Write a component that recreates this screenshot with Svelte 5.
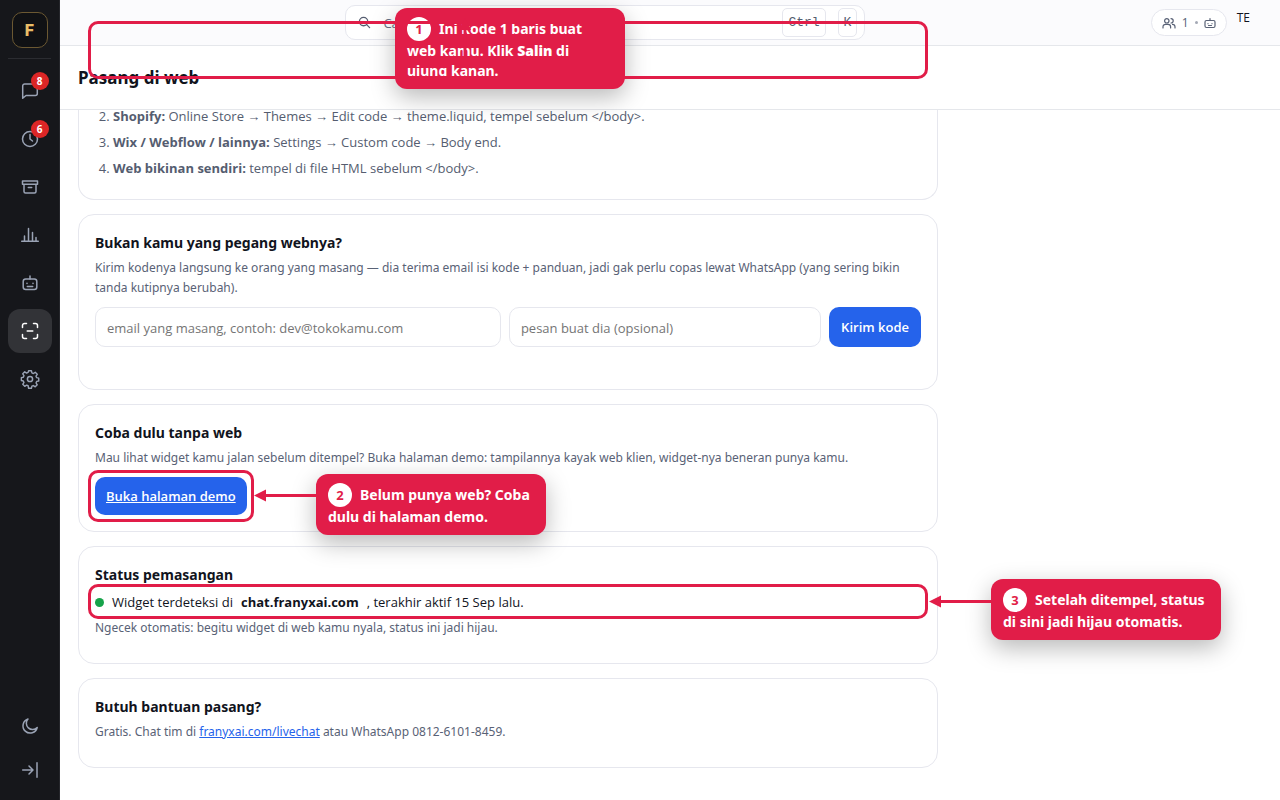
<script>
  const callouts = [
    { n: 1, cls: 'one', before: 'Ini kode 1 baris buat web kamu. Klik ', strong: 'Salin', after: ' di ujung kanan.' },
    { n: 2, cls: 'two', before: 'Belum punya web? Coba dulu di halaman demo.', strong: '', after: '' },
    { n: 3, cls: 'three', before: 'Setelah ditempel, status di sini jadi hijau otomatis.', strong: '', after: '' }
  ];
  const steps = [
    ['Shopify:', 'Online Store → Themes → Edit code → theme.liquid, tempel sebelum </body>.'],
    ['Wix / Webflow / lainnya:', 'Settings → Custom code → Body end.'],
    ['Web bikinan sendiri:', 'tempel di file HTML sebelum </body>.']
  ];
  const nav = [
    { id: 'chat', label: 'Percakapan', badge: 8 },
    { id: 'clock', label: 'Antrean', badge: 6 },
    { id: 'archive', label: 'Arsip' },
    { id: 'chart', label: 'Laporan' },
    { id: 'bot', label: 'Bot' },
    { id: 'scan', label: 'Pasang di web', active: true },
    { id: 'gear', label: 'Pengaturan' }
  ];
</script>

{#snippet icon(id)}
  <svg class="icon" viewBox="0 0 20 20" aria-hidden="true">
    {#if id === 'chat'}
      <path d="M2.700 17.300V5a2 2 0 0 1 2-2h10.600a2 2 0 0 1 2 2v7.500a2 2 0 0 1-2 2H6z" />
    {:else if id === 'clock'}
      <circle cx="10" cy="10" r="7.500" /><path d="M10 5.500V10l2.500 2" />
    {:else if id === 'archive'}
      <path d="M2.500 4h15v3.200h-15zM4 7.200v7.300a1.500 1.500 0 0 0 1.500 1.500h9a1.500 1.500 0 0 0 1.500-1.500V7.200M8.300 10.500h3.400" />
    {:else if id === 'chart'}
      <path d="M1.700 16.300h16.600M4.500 16v-5M8.500 16V3.500M12.500 16V7.500M16 16v-3.500" />
    {:else if id === 'bot'}
      <rect x="3.200" y="6" width="13.600" height="10.500" rx="2.500" /><path d="M10 6V3M7 10.200v.2M13 10.200v.2M7.300 13.500h5.400" />
    {:else if id === 'scan'}
      <path d="M2.500 6.500v-2a2 2 0 0 1 2-2h2M13.500 2.500h2a2 2 0 0 1 2 2v2M17.500 13.500v2a2 2 0 0 1-2 2h-2M6.500 17.500h-2a2 2 0 0 1-2-2v-2M7.200 10h5.600" />
    {:else if id === 'gear'}
      <path d="M8.500 1.500h3l.5 2.300 1.600.7 2-1.300 2.100 2.100-1.300 2 .7 1.600 2.200.5v3l-2.200.5-.7 1.600 1.300 2-2.100 2.100-2-1.300-1.600.7-.5 2.200h-3L8 17.500l-1.600-.7-2 1.300-2.100-2.100 1.300-2-.7-1.600L.8 11.900v-3l2.100-.5.7-1.600-1.300-2 2.100-2.100 2 1.300L8 3.300z" transform="translate(.6 .3) scale(.94)" /><circle cx="10" cy="10" r="2.600" />
    {:else if id === 'moon'}
      <path d="M8 3a7.200 7.200 0 1 0 9.200 8.500A6.200 6.200 0 0 1 8 3z" />
    {:else if id === 'collapse'}
      <path d="M2.700 10h10M9 6l4 4-4 4M17 2.800v14.400" />
    {/if}
  </svg>
{/snippet}

<div class="app">
  <nav class="side" aria-label="Menu utama">
    <a class="logo" href="#beranda">F</a>
    <hr />
    <div class="items">
      {#each nav as item}
        <a class="item" class:active={item.active} href={'#' + item.id} aria-label={item.label}>
          {@render icon(item.id)}
          {#if item.badge}<span class="badge">{item.badge}</span>{/if}
        </a>
      {/each}
    </div>
    <div class="foot">
      <button class="item" aria-label="Mode gelap">{@render icon('moon')}</button>
      <button class="item" aria-label="Buka menu">{@render icon('collapse')}</button>
    </div>
  </nav>

  <div class="page">
    <div class="topbar">
      <div class="search">
        <svg class="glass" viewBox="0 0 14 14" aria-hidden="true"><circle cx="6" cy="6" r="4.500" /><path d="M9.300 9.300l3.200 3.200" /></svg>
        <input type="search" aria-label="Cari" placeholder="Cari" />
        <kbd>Ctrl</kbd><kbd>K</kbd>
      </div>
      <div class="right">
        <button class="presence" aria-label="1 agen aktif">
          <svg viewBox="0 0 14 12" aria-hidden="true"><circle cx="4.800" cy="3.800" r="2.200" /><path d="M1 11V9.800a2.500 2.500 0 0 1 2.500-2.500h2.600a2.500 2.500 0 0 1 2.500 2.500V11M9 1.600a2.200 2.200 0 0 1 0 4.400M10.500 7.400A2.500 2.500 0 0 1 13 9.800V11" /></svg>
          <span>1</span><i></i>
          <svg class="mini" viewBox="0 0 12 12" aria-hidden="true"><rect x="1" y="3.500" width="10" height="7" rx="1.500" /><path d="M6 3.500V1.500M4 6.500v.2M8 6.500v.2M4.500 8.500h3" /></svg>
        </button>
        <span class="user">TE</span>
      </div>
    </div>
    <header><h1>Pasang di web</h1></header>

    <main>
      <section class="card cut">
        <ol start="2">
          {#each steps as [name, text]}<li><b>{name}</b> {text}</li>{/each}
        </ol>
      </section>

      <section class="card">
        <h2>Bukan kamu yang pegang webnya?</h2>
        <p>Kirim kodenya langsung ke orang yang masang — dia terima email isi kode + panduan, jadi gak perlu copas lewat WhatsApp (yang sering bikin tanda kutipnya berubah).</p>
        <form onsubmit={(e) => e.preventDefault()}>
          <input type="email" aria-label="Email yang masang" placeholder="email yang masang, contoh: dev@tokokamu.com" />
          <input type="text" aria-label="Pesan" placeholder="pesan buat dia (opsional)" />
          <button class="primary">Kirim kode</button>
        </form>
      </section>

      <section class="card">
        <h2>Coba dulu tanpa web</h2>
        <p>Mau lihat widget kamu jalan sebelum ditempel? Buka halaman demo: tampilannya kayak web klien, widget-nya beneran punya kamu.</p>
        <a class="primary demo ringed" href="#demo">Buka halaman demo</a>
      </section>

      <section class="card">
        <h2>Status pemasangan</h2>
        <div class="status ringed"><i></i><span>Widget terdeteksi di</span><b>chat.franyxai.com</b><span>, terakhir aktif 15 Sep lalu.</span></div>
        <p>Ngecek otomatis: begitu widget di web kamu nyala, status ini jadi hijau.</p>
      </section>

      <section class="card">
        <h2>Butuh bantuan pasang?</h2>
        <p>Gratis. Chat tim di <a href="#livechat">franyxai.com/livechat</a> atau WhatsApp 0812-6101-8459.</p>
      </section>
    </main>
  </div>

  <div class="tour">
    {#each callouts as c}
      <div class="callout {c.cls}"><span class="num">{c.n}</span>{c.before}{#if c.strong}<strong>{c.strong}</strong>{/if}{c.after}</div>
    {/each}
    <div class="frame"></div>
    <svg class="arrows" aria-hidden="true">
      <path d="M316 495.500H264M991 601.500H940M465 58V28" />
      <polygon points="254,495.500 266,489.500 266,501.500" />
      <polygon points="929,601.500 941,595.500 941,607.500" />
      <polygon points="465,18 459,30 471,30" />
    </svg>
  </div>
</div>

<style>
  :global(body) { margin: 0; }
  * { box-sizing: border-box; }
  .app {
    position: relative; display: flex; height: 100vh; overflow: hidden; background: #fff; color: #11141d;
    font: 13px/20px "Segoe UI", "Open Sans", "Noto Sans", sans-serif;
  }
  input, button { font: inherit; }
  svg { fill: none; stroke: currentColor; stroke-linecap: round; stroke-linejoin: round; }

  .side { flex: none; width: 60px; padding: 12px 8px 8px; display: flex; flex-direction: column; align-items: center; background: #16171b; border-right: 1px solid #25262b; }
  .logo { width: 36px; height: 36px; display: grid; place-items: center; border: 1px solid #6b5832; border-radius: 10px; background: #101114; color: #e9bd68; font: 800 16px/20px Inter, sans-serif; text-decoration: none; }
  hr { width: 43px; margin: 10px 0; border: 0; border-top: 1px solid #2b2c31; }
  .items, .foot { display: flex; flex-direction: column; gap: 4px; }
  .foot { margin-top: auto; gap: 0; }
  .item { position: relative; width: 44px; height: 44px; padding: 0; display: grid; place-items: center; border: 0; border-radius: 12px; background: none; color: #9aa3b5; }
  .item.active { background: #323337; color: #fff; }
  .icon { width: 20px; height: 20px; stroke-width: 1.500; }
  .badge { position: absolute; top: 3px; right: 3px; width: 18px; height: 18px; border-radius: 9px; background: #dc2626; color: #fff; font-size: 10px; font-weight: 700; line-height: 18px; text-align: center; }

  .page { flex: 1; min-width: 0; display: flex; flex-direction: column; }
  .topbar { flex: none; height: 46px; padding-right: 30px; display: flex; align-items: center; background: #fbfbfd; border-bottom: 1px solid #e5e7eb; }
  .search { flex: 0 1 520px; min-width: 0; margin: 0 auto; height: 35px; padding: 0 7px 0 12px; display: flex; align-items: center; gap: 12px; border: 1px solid #e6e7ee; border-radius: 10px; background: #fff; color: #555d70; }
  .search input { flex: 1; min-width: 0; padding: 0; border: 0; outline: 0; background: none; }
  .search input::placeholder { color: #667085; opacity: 1; }
  .glass { width: 13px; height: 13px; stroke-width: 1.400; }
  kbd { height: 29px; padding: 0 5px; border: 1px solid #e6e7ee; border-radius: 5px; font: 13px/27px "Liberation Mono", monospace; }
  .right { display: flex; justify-content: flex-end; gap: 10px; }
  .presence { height: 27px; padding: 0 10px; display: flex; align-items: center; gap: 6px; border: 1px solid #e6e7ee; border-radius: 14px; background: #fff; color: #596276; font-size: 12px; }
  .presence svg { width: 14px; height: 12px; stroke-width: 1.200; }
  .presence .mini { width: 12px; }
  .presence i { width: 3px; height: 3px; border-radius: 50%; background: #a4a9b5; }
  .user { font-size: 12px; line-height: 18px; }
  header { flex: none; height: 64px; padding: 0 18px; display: flex; align-items: center; border-bottom: 1px solid #e5e7eb; }
  h1 { margin: 0; font-family: "Segoe UI", "Noto Sans", sans-serif; font-size: 17px; line-height: 24px; font-weight: 700; }

  main { flex: 1; min-height: 0; overflow: hidden; padding: 0 18px; display: flex; flex-direction: column; gap: 14px; }
  .card { flex: none; width: 100%; max-width: 860px; padding: 16px; border: 1px solid #e6e7ee; border-radius: 16px; background: #fff; }
  .cut { height: 90px; padding: 0 16px; overflow: hidden; border-top: 0; border-radius: 0 0 16px 16px; }
  ol { margin: -7px 0 0; padding-left: 18px; color: #555d70; line-height: 26px; }
  h2 { margin: 0 0 3px; font-family: "Segoe UI", "Noto Sans", sans-serif; font-size: 14px; line-height: 24px; font-weight: 700; }
  p { margin: 0 0 9px; color: #596276; font-family: "Segoe UI", "Noto Sans", sans-serif; font-size: 12px; }
  p a { color: #2563eb; }
  form { display: grid; grid-template-columns: 13fr 10fr auto; gap: 8px; margin-bottom: 26px; }
  form input { min-width: 0; height: 40px; padding: 2px 11px 0; border: 1px solid #e6e7ee; border-radius: 10px; outline: 0; background: #fff; }
  form input::placeholder { color: #757575; opacity: 1; }
  .primary { padding: 0 12px; border: 0; border-radius: 10px; background: #2563eb; color: #fff; font-size: 13px; font-weight: 600; white-space: nowrap; }
  .demo { display: inline-block; padding: 0 11px; vertical-align: top; line-height: 38px; }
  .ringed { position: relative; }
  .ringed::after { content: ""; position: absolute; inset: -7px; border: 3px solid #e11d48; border-radius: 10px; }
  .status { display: flex; align-items: center; gap: 8px; height: 24px; margin-bottom: 4px; }
  .status::after { inset: -6px -7px -5px; }
  .status i { width: 9px; height: 9px; border-radius: 50%; background: #16a34a; }

  .tour { position: absolute; inset: 0; pointer-events: none; }
  .callout { position: absolute; width: 230px; padding: 9px 12px 8px; border-radius: 12px; background: #e11d48; color: #fff; font-family: "Segoe UI", "Noto Sans", sans-serif; font-size: 14px; line-height: 20px; font-weight: 700; box-shadow: 0 8px 24px rgba(0, 0, 0, .28); }
  .one { left: 395px; top: 8px; }
  .two { left: 316px; top: 474px; }
  .three { left: 991px; top: 579px; }
  .num { display: inline-block; width: 24px; height: 24px; margin-right: 8px; border-radius: 50%; background: #fff; color: #e11d48; font-size: 13px; line-height: 24px; text-align: center; }
  .frame { position: absolute; left: 88px; top: 21px; width: 840px; height: 58px; border: 3px solid #e11d48; border-radius: 10px; }
  .arrows { position: absolute; inset: 0; width: 100%; height: 100%; stroke: #e11d48; stroke-width: 3; stroke-linecap: butt; }
  .arrows polygon { fill: #e11d48; stroke: none; }
</style>
